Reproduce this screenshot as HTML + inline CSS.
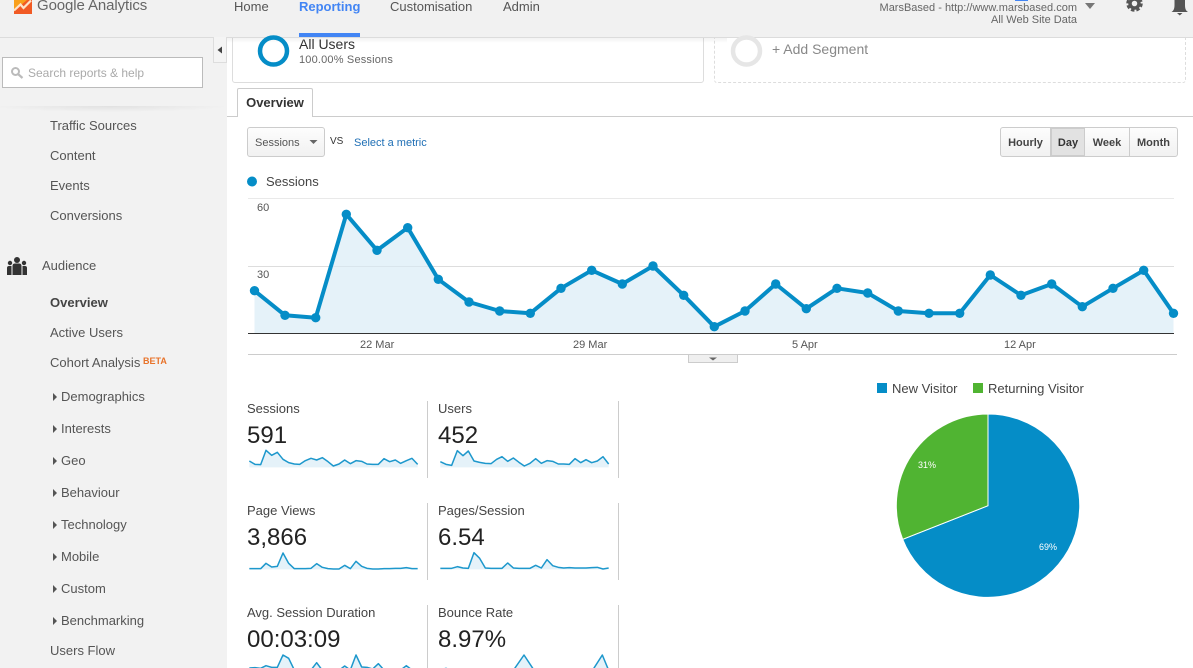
<!DOCTYPE html>
<html><head><meta charset="utf-8"><title>Google Analytics</title>
<style>
html,body{margin:0;padding:0}
body{width:1193px;height:668px;overflow:hidden;position:relative;background:#fff;font-family:"Liberation Sans",sans-serif;color:#333}
.t{position:absolute;white-space:nowrap;line-height:16px;font-size:13px;margin-top:1px}
.b{position:absolute;box-sizing:border-box}
.s{color:#555}
.arr{position:absolute;width:0;height:0;border-left:4px solid #555;border-top:4px solid transparent;border-bottom:4px solid transparent;left:53px}
.l{color:#444}
.v{font-size:24px;line-height:28px;color:#222}
.btn{position:absolute;top:127px;height:30px;box-sizing:border-box;background:linear-gradient(#fdfdfd,#f1f1f1);border:1px solid #ccc;font-size:11px;font-weight:bold;color:#444;line-height:30px;text-align:center}
svg{position:absolute;left:0;top:0}
</style></head><body>

<!-- backgrounds -->
<div class="b" style="left:0;top:37px;width:227px;height:631px;background:#f2f2f2"></div>
<div class="b" style="left:232px;top:30px;width:472px;height:53px;border:1px solid #ddd;border-radius:3px"></div>
<div class="b" style="left:714px;top:30px;width:472px;height:53px;border:1px dashed #ddd;border-radius:3px"></div>
<div class="b" style="left:0;top:0;width:1193px;height:38px;background:#f1f1f1;border-bottom:1px solid #dcdcdc"></div>
<div class="b" style="left:227px;top:38px;width:500px;height:5px;background:linear-gradient(rgba(0,0,0,.05),rgba(0,0,0,0))"></div>
<div class="b" style="left:1015px;top:0;width:13px;height:1px;background:#4285f4"></div>
<div class="b" style="left:213px;top:37px;width:14px;height:26px;border:1px solid #ddd;border-top:0;background:#f4f4f4"></div>
<div class="b" style="left:2px;top:57px;width:201px;height:31px;background:#fff;border:1px solid #bbb"></div>
<div class="b" style="left:0;top:106px;width:227px;height:6px;background:radial-gradient(ellipse 120px 6px at 110px 0,rgba(0,0,0,.07),rgba(0,0,0,0))"></div>
<div class="b" style="left:247px;top:127px;width:78px;height:30px;background:linear-gradient(#fdfdfd,#f1f1f1);border:1px solid #ccc;border-radius:3px"></div>

<svg width="1193" height="668" viewBox="0 0 1193 668">
<!-- logo -->
<path d="M14 0H32V14H14Z" fill="#f15a24"/>
<path d="M14 0H27L21 5 14 11Z" fill="#f9a01b"/>
<path d="M14 10.500L20.500 4.500 23.500 8 31 0.500" fill="none" stroke="#fde3c8" stroke-width="2.200"/>
<!-- gear -->
<circle cx="1134.500" cy="3.500" r="4.500" fill="none" stroke="#555" stroke-width="3.500"/>
<circle cx="1134.500" cy="3.500" r="7" fill="none" stroke="#555" stroke-width="2.500" stroke-dasharray="3.500 2"/>
<!-- bell -->
<path d="M1171.500 12c2.500-1.500 3-4 3-7V0H1185V5c0 3 .5 5.500 3 7Z" fill="#555"/>
<path d="M1177 13H1182.500L1179.750 15.500Z" fill="#555"/>
<path d="M1085 3H1095L1090 9Z" fill="#777"/>
<!-- sidebar toggle -->
<path d="M222 46.500V53.500L217.500 50Z" fill="#444"/>
<!-- search icon -->
<circle cx="15.500" cy="71.500" r="3.500" fill="none" stroke="#bbb" stroke-width="2"/>
<path d="M18 74L22.500 78" stroke="#bbb" stroke-width="2.200"/>
<!-- audience icon -->
<g fill="#333">
<circle cx="17" cy="260" r="3"/><circle cx="10" cy="263" r="2.200"/><circle cx="24" cy="263" r="2.200"/>
<path d="M12.500 275V266q0-2.500 2.500-2.500H19q2.500 0 2.500 2.500V275Z"/>
<path d="M7 275V268q0-2 2-2H11.500V275Z"/><path d="M27 275V268q0-2-2-2H22.500V275Z"/>
</g>
<!-- all users ring -->
<circle cx="273.500" cy="51" r="13.500" fill="none" stroke="#058dc7" stroke-width="4.500"/>
<circle cx="746.500" cy="51" r="13.500" fill="none" stroke="#e6e6e6" stroke-width="4.500"/>
<!-- dropdown arrow -->
<path d="M309.500 140H317.500L313.500 144Z" fill="#666"/>
<!-- legend dot -->
<circle cx="252" cy="181.500" r="5" fill="#058dc7"/>
<!-- chart -->
<path d="M248 198.500H1174M248 266.500H1174" stroke="#e9e9e9" stroke-width="1"/>
<path d="M254.500 290.700L285 315.300 315.700 317.700 346.300 214.300 377 250.300 407.700 227.700 438.300 279.300 469 302 499.700 311 530.300 313.300 561 288.300 591.700 270.300 622.300 284 653 266 683.700 295.300 714.300 326.700 745 311 775.700 284 806.300 308.700 837 288.300 867.700 293 898.300 311 929 313.300 959.700 313.300 990.300 275 1021 295.300 1051.700 284 1082.300 306.700 1113 288.300 1143.700 270.300 1173.500 313.300V333H254.500Z" fill="#e5f2f9"/>
<path d="M248 266.500H1174" stroke="#000" stroke-opacity=".05"/>
<path d="M248 333.500H1174" stroke="#333" stroke-width="1"/>
<path d="M248 354.500H1177" stroke="#ccc" stroke-width="1"/>
<path d="M688.500 355V362.500H737.500V355" fill="#efefef" stroke="#ccc"/>
<path d="M709 357.500H717L713 360.500Z" fill="#666"/>
<polyline fill="none" stroke="#058dc7" stroke-width="4" stroke-linejoin="round" points="254.500,290.700 285,315.300 315.700,317.700 346.300,214.300 377,250.300 407.700,227.700 438.300,279.300 469,302 499.700,311 530.300,313.300 561,288.300 591.700,270.300 622.300,284 653,266 683.700,295.300 714.300,326.700 745,311 775.700,284 806.300,308.700 837,288.300 867.700,293 898.300,311 929,313.300 959.700,313.300 990.300,275 1021,295.300 1051.700,284 1082.300,306.700 1113,288.300 1143.700,270.300 1173.500,313.300"/>
<g fill="#058dc7">
<circle cx="254.500" cy="290.700" r="4.700"/><circle cx="285" cy="315.300" r="4.700"/><circle cx="315.700" cy="317.700" r="4.700"/><circle cx="346.300" cy="214.300" r="4.700"/><circle cx="377" cy="250.300" r="4.700"/><circle cx="407.700" cy="227.700" r="4.700"/><circle cx="438.300" cy="279.300" r="4.700"/><circle cx="469" cy="302" r="4.700"/><circle cx="499.700" cy="311" r="4.700"/><circle cx="530.300" cy="313.300" r="4.700"/><circle cx="561" cy="288.300" r="4.700"/><circle cx="591.700" cy="270.300" r="4.700"/><circle cx="622.300" cy="284" r="4.700"/><circle cx="653" cy="266" r="4.700"/><circle cx="683.700" cy="295.300" r="4.700"/><circle cx="714.300" cy="326.700" r="4.700"/><circle cx="745" cy="311" r="4.700"/><circle cx="775.700" cy="284" r="4.700"/><circle cx="806.300" cy="308.700" r="4.700"/><circle cx="837" cy="288.300" r="4.700"/><circle cx="867.700" cy="293" r="4.700"/><circle cx="898.300" cy="311" r="4.700"/><circle cx="929" cy="313.300" r="4.700"/><circle cx="959.700" cy="313.300" r="4.700"/><circle cx="990.300" cy="275" r="4.700"/><circle cx="1021" cy="295.300" r="4.700"/><circle cx="1051.700" cy="284" r="4.700"/><circle cx="1082.300" cy="306.700" r="4.700"/><circle cx="1113" cy="288.300" r="4.700"/><circle cx="1143.700" cy="270.300" r="4.700"/><circle cx="1173.500" cy="313.300" r="4.700"/>
</g>
<!-- scorecard dividers -->
<path d="M427.500 401V478M618.500 401V478M427.500 503V580M618.500 503V580M427.500 605V668M618.500 605V668" stroke="#ccc" stroke-width="1"/>
<!-- sparklines -->
<g transform="translate(240 395) scale(.33333)">
<g fill="#e5f2f9">
<path d="M28 198L45 208 62 209 78 166 95 181 112 172 129 193 146 203 163 207 179 208 196 197 213 190 230 195 247 188 264 200 280 213 297 207 314 195 331 206 348 197 365 199 381 207 398 208 415 208 432 191 449 200 466 195 482 205 499 197 516 190 533 208V217H28Z"/>
<path d="M601 200L618 208 635 211 652 167 669 182 685 168 702 198 719 202 736 205 753 206 770 193 786 185 803 199 820 189 837 202 853 213 870 205 887 191 904 205 921 197 938 199 955 207 971 207 988 208 1005 191 1022 203 1038 194 1055 203 1072 198 1089 185 1106 207V217H601Z"/>
<path d="M28 521L45 521 62 521 78 505 95 516 112 514 129 474 146 505 163 521 179 521 196 521 213 520 230 506 247 517 264 521 280 522 297 522 314 511 331 521 348 499 365 514 381 520 398 522 415 522 432 521 449 521 466 520 482 520 499 518 516 521 533 521V523H28Z"/>
<path d="M601 520L618 520 635 520 652 515 669 519 685 520 702 473 719 490 736 519 753 520 770 520 786 520 803 504 820 519 837 520 853 520 870 520 887 511 904 519 921 494 938 512 955 517 971 519 988 518 1005 519 1022 519 1038 519 1055 518 1072 517 1089 522 1106 519V523H601Z"/>
<path d="M28 819L45 818 62 820 78 812 95 817 112 817 129 780 146 790 163 825H213L230 803 247 826H297L314 813 331 825 348 780 365 816 381 817 398 822 415 806 432 825H482L499 812 516 825V830H28Z"/>
<path d="M601 825L618 820 635 826H820L852 780 885 830H1055L1087 780 1106 826V830H601Z"/>
</g>
<g fill="none" stroke="#058dc7" stroke-opacity=".9" stroke-width="4.500" stroke-linejoin="round">
<polyline points="28,198 45,208 62,209 78,166 95,181 112,172 129,193 146,203 163,207 179,208 196,197 213,190 230,195 247,188 264,200 280,213 297,207 314,195 331,206 348,197 365,199 381,207 398,208 415,208 432,191 449,200 466,195 482,205 499,197 516,190 533,208"/>
<polyline points="601,200 618,208 635,211 652,167 669,182 685,168 702,198 719,202 736,205 753,206 770,193 786,185 803,199 820,189 837,202 853,213 870,205 887,191 904,205 921,197 938,199 955,207 971,207 988,208 1005,191 1022,203 1038,194 1055,203 1072,198 1089,185 1106,207"/>
<polyline points="28,521 45,521 62,521 78,505 95,516 112,514 129,474 146,505 163,521 179,521 196,521 213,520 230,506 247,517 264,521 280,522 297,522 314,511 331,521 348,499 365,514 381,520 398,522 415,522 432,521 449,521 466,520 482,520 499,518 516,521 533,521"/>
<polyline points="601,520 618,520 635,520 652,515 669,519 685,520 702,473 719,490 736,519 753,520 770,520 786,520 803,504 820,519 837,520 853,520 870,520 887,511 904,519 921,494 938,512 955,517 971,519 988,518 1005,519 1022,519 1038,519 1055,518 1072,517 1089,522 1106,519"/>
<polyline points="28,819 45,818 62,820 78,812 95,817 112,817 129,780 146,790 163,825 213,825 230,803 247,826 297,826 314,813 331,825 348,780 365,816 381,817 398,822 415,806 432,825 482,825 499,812 516,825"/>
<polyline points="601,825 618,820 635,826 820,826 852,780 885,830 1055,830 1087,780 1106,826"/>
</g>
</g>
<!-- pie -->
<path d="M988 505.700V414A91.700 91.700 0 1 1 902.700 539.300Z" fill="#058dc7" stroke="#fff" stroke-width="1"/>
<path d="M988 505.700L902.700 539.300A91.700 91.700 0 0 1 988 414Z" fill="#50b432" stroke="#fff" stroke-width="1"/>
<rect x="877" y="383" width="10" height="10" fill="#058dc7"/>
<rect x="973" y="383" width="10" height="10" fill="#50b432"/>
</svg>

<!-- header text -->
<div class="t" style="left:37px;top:-3px;font-size:15px;color:#666;letter-spacing:-.1px">Google Analytics</div>
<div class="t" style="left:234px;top:-2px;color:#555">Home</div>
<div class="t" style="left:299px;top:-2px;color:#4285f4;font-weight:bold">Reporting</div>
<div class="b" style="left:299px;top:33px;width:61px;height:4px;background:#4285f4"></div>
<div class="t" style="left:390px;top:-2px;color:#555">Customisation</div>
<div class="t" style="left:503px;top:-2px;color:#555">Admin</div>
<div class="t" style="right:116px;top:-1px;font-size:11px;color:#666">MarsBased - http://www.marsbased.com</div>
<div class="t" style="right:116px;top:11px;font-size:11px;color:#666">All Web Site Data</div>

<div class="t" style="left:28px;top:64px;font-size:12px;color:#aaa">Search reports &amp; help</div>

<!-- side nav -->
<div class="t s" style="left:50px;top:117px">Traffic Sources</div>
<div class="t s" style="left:50px;top:147px">Content</div>
<div class="t s" style="left:50px;top:177px">Events</div>
<div class="t s" style="left:50px;top:207px">Conversions</div>
<div class="t s" style="left:42px;top:257px">Audience</div>
<div class="t" style="left:50px;top:294px;font-weight:bold;color:#444">Overview</div>
<div class="t s" style="left:50px;top:324px">Active Users</div>
<div class="t s" style="left:50px;top:354px">Cohort Analysis</div>
<div class="t" style="left:143px;top:353px;font-size:9px;line-height:14px;font-weight:bold;color:#e8732a">BETA</div>
<div class="arr" style="top:392.500px"></div><div class="t s" style="left:61px;top:388px">Demographics</div>
<div class="arr" style="top:424.500px"></div><div class="t s" style="left:61px;top:420px">Interests</div>
<div class="arr" style="top:456.500px"></div><div class="t s" style="left:61px;top:452px">Geo</div>
<div class="arr" style="top:488.500px"></div><div class="t s" style="left:61px;top:484px">Behaviour</div>
<div class="arr" style="top:520.500px"></div><div class="t s" style="left:61px;top:516px">Technology</div>
<div class="arr" style="top:552.500px"></div><div class="t s" style="left:61px;top:548px">Mobile</div>
<div class="arr" style="top:584.500px"></div><div class="t s" style="left:61px;top:580px">Custom</div>
<div class="arr" style="top:616.500px"></div><div class="t s" style="left:61px;top:612px">Benchmarking</div>
<div class="t s" style="left:50px;top:642px">Users Flow</div>

<!-- segments -->
<div class="t" style="left:299px;top:35px;font-size:14px;color:#333">All Users</div>
<div class="t" style="left:299px;top:51px;font-size:11px;letter-spacing:.18px;color:#666">100.00% Sessions</div>
<div class="t" style="left:772px;top:40px;font-size:14px;color:#888">+ Add Segment</div>

<!-- tab -->
<div class="b" style="left:227px;top:116px;width:966px;height:1px;background:#ccc"></div>
<div class="b" style="left:237px;top:88px;width:76px;height:29px;background:#fff;border:1px solid #ccc;border-bottom:0;border-radius:2px 2px 0 0;font-size:13px;font-weight:bold;line-height:28px;text-align:center;color:#333">Overview</div>

<!-- metric select -->
<div class="t" style="left:255px;top:134px;font-size:11px;color:#555">Sessions</div>
<div class="t" style="left:330px;top:133px;font-size:10px;color:#333">VS</div>
<div class="t" style="left:354px;top:134px;font-size:11px;color:#1f6fb5">Select a metric</div>

<!-- time buttons -->
<div class="btn" style="left:1000px;width:51px;border-radius:3px 0 0 3px">Hourly</div>
<div class="btn" style="left:1050px;width:36px;background:#e2e2e2;border:2px solid #ccc;line-height:28px;color:#333">Day</div>
<div class="btn" style="left:1085px;width:45px;border-left:0">Week</div>
<div class="btn" style="left:1129px;width:49px;border-radius:0 3px 3px 0">Month</div>

<!-- chart labels -->
<div class="t" style="left:266px;top:173px;color:#444">Sessions</div>
<div class="t" style="left:257px;top:199px;font-size:11px;color:#555">60</div>
<div class="t" style="left:257px;top:266px;font-size:11px;color:#555">30</div>
<div class="t" style="left:360px;top:336px;font-size:11px;color:#555">22 Mar</div>
<div class="t" style="left:573px;top:336px;font-size:11px;color:#555">29 Mar</div>
<div class="t" style="left:792px;top:336px;font-size:11px;color:#555">5 Apr</div>
<div class="t" style="left:1004px;top:336px;font-size:11px;color:#555">12 Apr</div>

<!-- scorecards -->
<div class="t l" style="left:247px;top:400px">Sessions</div><div class="t v" style="left:247px;top:421px">591</div>
<div class="t l" style="left:438px;top:400px">Users</div><div class="t v" style="left:438px;top:421px">452</div>
<div class="t l" style="left:247px;top:502px">Page Views</div><div class="t v" style="left:247px;top:523px">3,866</div>
<div class="t l" style="left:438px;top:502px">Pages/Session</div><div class="t v" style="left:438px;top:523px">6.54</div>
<div class="t l" style="left:247px;top:604px">Avg. Session Duration</div><div class="t v" style="left:247px;top:625px">00:03:09</div>
<div class="t l" style="left:438px;top:604px">Bounce Rate</div><div class="t v" style="left:438px;top:625px">8.97%</div>

<!-- pie labels -->
<div class="t" style="left:892px;top:380px;color:#444">New Visitor</div>
<div class="t" style="left:988px;top:380px;color:#444">Returning Visitor</div>
<div class="t" style="left:918px;top:456px;font-size:9px;color:#fff">31%</div>
<div class="t" style="left:1039px;top:538px;font-size:9px;color:#fff">69%</div>
</body></html>
